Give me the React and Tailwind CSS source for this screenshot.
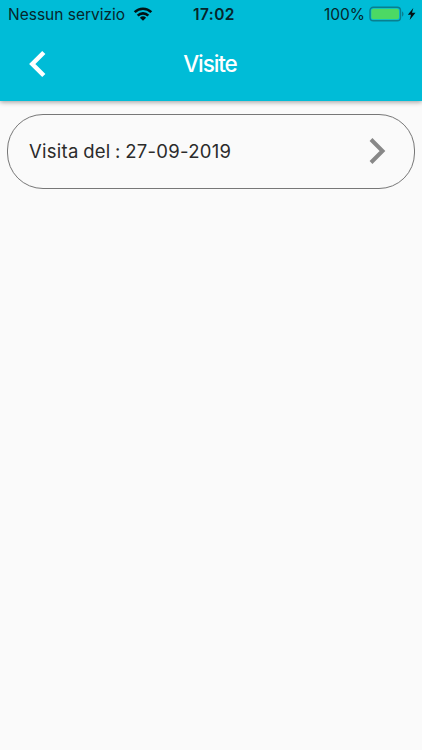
const statusBar = {
    carrier: "Nessun servizio",
    time: "17:02",
    battery: "100%",
};

const visits = [{ id: 1, date: "27-09-2019" }];

function WifiIcon() {
    return (
        <svg width="20" height="14" viewBox="0 0 20 14" className="mb-[2px] ml-2 shrink-0">
            <g fill="none" stroke="#021214" strokeWidth="2.6">
                <path d="M1.700 5.200a11.800 11.800 0 0 1 16.600 0" />
                <path d="M4.700 8.600a7.500 7.500 0 0 1 10.600 0" />
            </g>
            <path d="M10 13.800 6.900 10.700a4.500 4.500 0 0 1 6.200 0z" fill="#021214" />
        </svg>
    );
}

function BatteryIcon() {
    return (
        <svg width="48" height="16" viewBox="0 0 48 16" className="ml-1 shrink-0">
            <rect x="1" y="1.200" width="30.500" height="13.600" rx="3.300" fill="none" stroke="#087f90" strokeWidth="1.400" />
            <rect x="2.300" y="2.700" width="27.700" height="10.600" rx="2" fill="#4cd964" />
            <path d="M33 5.500c2 .6 2 4.400 0 5z" fill="#087f90" />
            <path d="M44.300 2 38.800 8.700h3.200L40.700 14l5.800-7.200h-3.500z" fill="#021214" />
        </svg>
    );
}

export default function App() {
    return (
        <div className="flex flex-col h-screen bg-[#fafafa] font-['Inter',sans-serif]">
            {/* Header */}
            <header className="h-[100.500px] bg-[#00bcd7] shadow-[0_1px_5px_rgba(0,0,0,0.4)]">
                <div className="grid grid-cols-3 items-center h-7 pl-2 pr-[5px] text-[15.500px] text-[#06262b]">
                    <div className="flex items-center whitespace-nowrap pt-px">
                        <span>{statusBar.carrier}</span>
                        <WifiIcon />
                    </div>
                    <span className="pt-px pl-[3px] text-center font-semibold tracking-[0.4px]">{statusBar.time}</span>
                    <div className="flex items-center justify-end">
                        <span className="pt-px">{statusBar.battery}</span>
                        <BatteryIcon />
                    </div>
                </div>
                <div className="grid grid-cols-3 items-center h-[72px] text-white">
                    <button className="pl-7" aria-label="Indietro">
                        <svg width="18" height="28" viewBox="0 0 18 28" fill="none" stroke="currentColor" strokeWidth="4.500">
                            <path d="M15.800 2.500 4.300 14l11.500 11.500" />
                        </svg>
                    </button>
                    <h1 className="pr-[2px] text-center text-[22.500px] font-medium tracking-[-1.1px]">Visite</h1>
                </div>
            </header>

            {/* Visits list */}
            <main className="flex flex-col gap-3 px-[7px] pt-[13px]">
                {visits.map((visit) => (
                    <button
                        key={visit.id}
                        className="flex items-center justify-between h-[75px] pl-[21px] pr-7 border border-[#777] rounded-[36px] text-[#2b2b2b]"
                    >
                        <span className="pt-px text-[18.500px] tracking-[0.280px] [word-spacing:-1px]">
                            Visita del : {visit.date}
                        </span>
                        <svg width="17" height="26" viewBox="0 0 17 26" fill="none" stroke="#888" strokeWidth="4">
                            <path d="M2 1.500 13.500 13 2 24.500" />
                        </svg>
                    </button>
                ))}
            </main>
        </div>
    );
}
